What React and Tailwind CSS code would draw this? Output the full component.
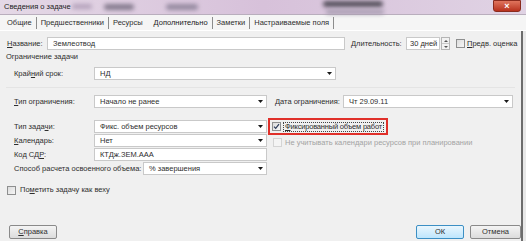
import React from 'react'

function Arrow() {
  return (
    <svg width="5" height="3" viewBox="0 0 5 3" className="shrink-0">
      <path d="M0 0h5L2.5 3z" fill="#1a1a1a" />
    </svg>
  )
}

function Field({ value, className = '', dropdown = false }) {
  return (
    <div className={`flex items-center h-[13px] bg-white border border-[#c9c9c9] pr-[3px] ${className}`}>
      <span className="flex-1 whitespace-nowrap">{value}</span>
      {dropdown && <Arrow />}
    </div>
  )
}

function Check({ checked = false, disabled = false }) {
  return (
    <div
      className={`w-[9px] h-[9px] shrink-0 border flex items-center justify-center ${
        disabled ? 'border-[#d4d4d4] bg-[#f4f4f4]' : 'border-[#8e8f8f] bg-gradient-to-br from-[#dcdcdc] to-[#f6f6f6]'
      }`}
    >
      {checked && (
        <svg width="7" height="7" viewBox="0 0 7 7">
          <path d="M1 3.6l1.7 1.8L6 1.2" stroke="#2b3b5a" strokeWidth="1.2" fill="none" />
        </svg>
      )}
    </div>
  )
}

function Label({ children, className = '' }) {
  return <span className={`shrink-0 whitespace-nowrap ${className}`}>{children}</span>
}

const tabs = ['Общие', 'Предшественники', 'Ресурсы', 'Дополнительно', 'Заметки', 'Настраиваемые поля']

export default function App() {
  return (
    <div
      className="w-[526px] h-[241px] flex flex-col overflow-hidden text-[7.5px] leading-none text-[#2e2e2e] bg-[#f0f0f0]"
      style={{ fontFamily: '"Liberation Sans", Arial, sans-serif' }}
    >
      {/* Title bar */}
      <div className="relative h-[15px] shrink-0 flex items-center pl-[4px] bg-gradient-to-r from-[#e4d8e6] via-[#d7c1da] to-[#e0d3e4] border-b border-[#b9aebd]">
        <span className="relative z-10 text-[7.5px] text-[#1c1c1c]">Сведения о задаче</span>
        <div className="absolute left-[72px] top-[4px] w-[20px] h-[5px] rounded-full bg-[#b4a2bb] blur-[2px]" />
        <div className="absolute left-[104px] top-[4px] w-[30px] h-[6px] rounded-full bg-[#857b8e] blur-[2px]" />
        <div className="absolute left-[166px] top-[4px] w-[32px] h-[6px] rounded-full bg-[#958aa0] blur-[2px]" />
        <div className="absolute left-[323px] top-[1px] w-[60px] h-[6px] rounded-full bg-[#55505c] blur-[2px]" />
        <div className="absolute left-[326px] top-[10px] w-[58px] h-[4px] rounded-full bg-[#a197ab] blur-[2px]" />
        <div className="absolute right-[5px] top-0 w-[28px] h-[12px] rounded-b-[3px] bg-gradient-to-b from-[#e0745d] to-[#b8301c] border border-[#8a2b1e] flex items-center justify-center text-white text-[9px] font-bold">
          ×
        </div>
      </div>

      {/* Tabs */}
      <div className="h-[16px] shrink-0 flex items-center pl-[6px] bg-[#f5f5f5] border-b border-white">
        {tabs.map((t, i) => (
          <div key={t} className="flex items-center">
            <span className={`px-[1px] ${i === 3 ? 'text-[#1a1a1a]' : ''}`}>{t}</span>
            {i !== 2 && <span className="mx-[3px] w-px h-[12px] bg-[#8c8c8c]" />}
            {i === 2 && <span className="mx-[3px] w-[3px]" />}
          </div>
        ))}
      </div>

      {/* Body */}
      <div className="flex-1 flex">
        <div className="flex-1 flex flex-col pt-[6px] pb-[2px]">
          {/* Название */}
          <div className="flex items-center h-[13px]">
            <Label className="ml-[7px] w-[40px]">
              <u>Н</u>азвание:
            </Label>
            <Field value="Землеотвод" className="w-[298px] pl-[5px]" />
            <Label className="ml-[6px] w-[55px]">Длительность:</Label>
            <Field value="30 дней" className="w-[34px] pl-[3px]" />
            <div className="ml-[1px] w-[9px] h-[13px] flex flex-col border border-[#b5b5b5] bg-[#f2f2f2]">
              <div className="flex-1 flex items-center justify-center border-b border-[#c8c8c8]">
                <svg width="4" height="2" viewBox="0 0 4 2"><path d="M0 2h4L2 0z" fill="#555" /></svg>
              </div>
              <div className="flex-1 flex items-center justify-center">
                <svg width="4" height="2" viewBox="0 0 4 2"><path d="M0 0h4L2 2z" fill="#555" /></svg>
              </div>
            </div>
            <div className="ml-[6px] flex items-center gap-[2px] whitespace-nowrap">
              <Check />
              <span>
                <u>П</u>редв. оценка
              </span>
            </div>
          </div>

          {/* Ограничение задачи */}
          <div className="mt-[2px] h-[10px] flex items-center pl-[6px]">Ограничение задачи</div>

          <div className="mt-[5px] flex items-center h-[13px] pl-[14px]">
            <Label className="w-[80px]">
              Край<u>н</u>ий срок:
            </Label>
            <Field value="НД" dropdown className="w-[242px] pl-[5px]" />
          </div>

          <div className="mt-[7px] h-px bg-[#e4e4e4] mx-[6px]" />

          <div className="mt-[7px] flex items-center h-[13px] pl-[14px]">
            <Label className="w-[80px]">
              <u>Т</u>ип ограничения:
            </Label>
            <Field value="Начало не ранее" dropdown className="w-[173px] pl-[5px]" />
            <Label className="ml-[8px] w-[68px]">Дата ограничения:</Label>
            <Field value="Чт 29.09.11" dropdown className="w-[170px] pl-[5px]" />
          </div>

          {/* Task type block */}
          <div className="mt-[12px] flex">
            <div className="flex flex-col gap-[1px] pl-[14px]">
              <div className="flex items-center h-[13px]">
                <Label className="w-[80px]">
                  Тип зада<u>ч</u>и:
                </Label>
                <Field value="Фикс. объем ресурсов" dropdown className="w-[173px] pl-[5px]" />
              </div>
              <div className="flex items-center h-[13px]">
                <Label className="w-[80px]">
                  <u>К</u>алендарь:
                </Label>
                <Field value="Нет" dropdown className="w-[173px] pl-[5px]" />
              </div>
              <div className="flex items-center h-[13px]">
                <Label className="w-[80px]">
                  Код СД<u>Р</u>:
                </Label>
                <Field value="КТДж.ЗЕМ.ААА" className="w-[173px] pl-[5px]" />
              </div>
              <div className="flex items-center h-[13px]">
                <Label className="w-[129px]">Способ расчета освоенного объема:</Label>
                <Field value="% завершения" dropdown className="w-[124px] pl-[5px]" />
              </div>
            </div>

            <div className="ml-[1px] flex flex-col gap-[3px] -mt-[2px]">
              <div className="w-[120px] h-[17px] border-2 border-[#e0302a] flex items-center pl-[2px] gap-[2px] whitespace-nowrap">
                <Check checked />
                <span className="border border-dotted border-[#444] px-[1px] h-[10px] flex items-center tracking-[-0.2px]">
                  <u>Ф</u>иксированный объем работ
                </span>
              </div>
              <div className="flex items-center gap-[3px] pl-[5px] text-[#a3a3a3] whitespace-nowrap">
                <Check disabled />
                <span>Не учитывать календари ресурсов при планировании</span>
              </div>
            </div>
          </div>

          <div className="mt-[10px] h-[10px] flex items-center gap-[4px] pl-[7px] whitespace-nowrap">
            <Check />
            <span>
              По<u>м</u>етить задачу как веху
            </span>
          </div>

          <div className="flex-1" />

          {/* Buttons */}
          <div className="flex items-center h-[14px] pl-[9px]">
            <button className="w-[48px] h-[14px] border border-[#8a8a8a] rounded-[2px] bg-gradient-to-b from-[#f4f4f4] to-[#dcdcdc] text-[7.5px] text-[#2e2e2e]">
              <u>С</u>правка
            </button>
            <div className="flex-1" />
            <button className="w-[48px] h-[14px] border border-[#3c8fc4] rounded-[2px] bg-gradient-to-b from-[#eaf6fd] to-[#bee6fd] text-[7.5px] text-[#2e2e2e]">
              ОК
            </button>
            <button className="ml-[6px] w-[51px] h-[14px] border border-[#8a8a8a] rounded-[2px] bg-gradient-to-b from-[#f4f4f4] to-[#dcdcdc] text-[7.5px] text-[#2e2e2e]">
              Отмена
            </button>
          </div>
        </div>
        <div className="w-[2px] bg-[#6c6c6c]" />
        <div className="w-[3px] bg-[#e8e8e8]" />
      </div>
    </div>
  )
}
